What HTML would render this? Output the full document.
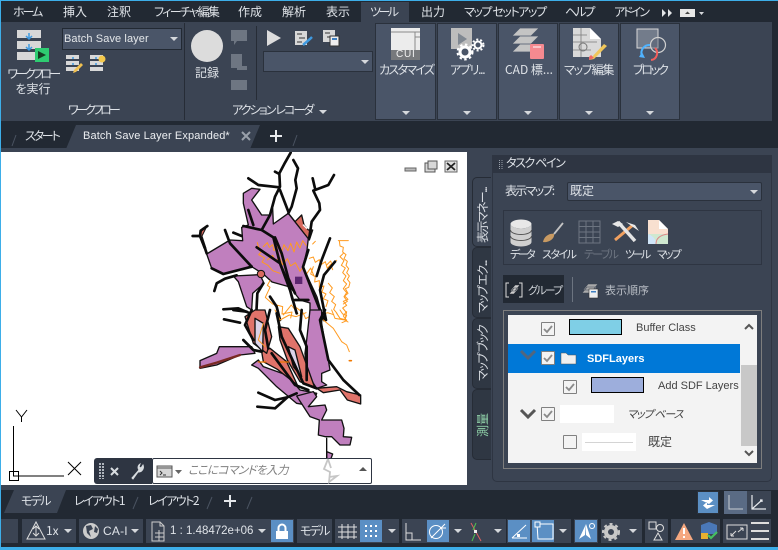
<!DOCTYPE html>
<html lang="ja"><head><meta charset="utf-8"><style>
html,body{margin:0;padding:0;background:#222933}
#r{position:relative;width:778px;height:550px;overflow:hidden;background:#222933;font-family:"Liberation Sans","Noto Sans CJK JP",sans-serif;font-size:12px;color:#dfe3e8}
#r div,#r span.t{position:absolute}
.t{white-space:nowrap;line-height:14px}
.j{font-family:"Noto Sans CJK JP","Liberation Sans",sans-serif;font-size:12px;font-feature-settings:"palt"}
.b{background:#4a5568;box-sizing:border-box;border:1px solid #2a313c}
.g{background:#3b4453;height:24px;top:519px}
.on{background:#5b8fc4;position:absolute}
svg{position:absolute;overflow:visible}
.dn{width:0;height:0;border-left:4px solid transparent;border-right:4px solid transparent;border-top:4px solid #d5d8dc}
.tab{background:#2f3743;left:472px;width:19px;border-radius:5px 0 0 5px;box-sizing:border-box;border:1px solid #262c36;border-right:0}
.rot{transform:rotate(-90deg);transform-origin:0 0;color:#d8dce2}
.cb{width:12px;height:12px;background:#f3f3f3;border:1px solid #808080;border-radius:1px}
</style></head><body><div id="r">
<div style="left:0;top:0;width:778px;height:1px;background:#3daee9"></div>
<div style="left:0;top:0;width:1px;height:550px;background:#3daee9"></div>
<div style="left:0;top:547px;width:778px;height:3px;background:#3daee9"></div>

<div style="left:361px;top:2px;width:48px;height:20px;background:#3b4453"></div>
<span class="t j" style="left:13px;top:5px;letter-spacing:-2px">ホーム</span>
<span class="t j" style="left:63px;top:5px">挿入</span>
<span class="t j" style="left:107px;top:5px">注釈</span>
<span class="t j" style="left:154px;top:5px;letter-spacing:-1.6px">フィーチャ編集</span>
<span class="t j" style="left:238px;top:5px">作成</span>
<span class="t j" style="left:282px;top:5px">解析</span>
<span class="t j" style="left:326px;top:5px">表示</span>
<span class="t j" style="left:370px;top:5px;letter-spacing:-2.500px">ツール</span>
<span class="t j" style="left:421px;top:5px">出力</span>
<span class="t j" style="left:464px;top:5px;letter-spacing:-1.400px">マップ セットアップ</span>
<span class="t j" style="left:565px;top:5px;letter-spacing:-2px">ヘルプ</span>
<span class="t j" style="left:614px;top:5px;letter-spacing:-2px">アドイン</span>
<svg style="left:660px;top:8px" width="14" height="10"><path d="M2 1l4 4-4 4zM8 1l4 4-4 4z" fill="#e4e6e9"/></svg>
<div style="left:680px;top:9px;width:15px;height:8px;background:#e8e8e8"></div>
<svg style="left:680px;top:9px" width="24" height="10"><path d="M5 5l2.500-2.500 2.500 2.500z" fill="#444"/><path d="M19 3h5l-2.500 3z" fill="#d5d8dc"/></svg>

<div style="left:1px;top:22px;width:771px;height:99px;background:#3b4453"></div>
<div style="left:184px;top:23px;width:1px;height:97px;background:#262c36"></div>
<div style="left:256px;top:26px;width:1px;height:74px;background:#262c36"></div>
<svg style="left:17px;top:30px" width="34" height="33">
<path d="M0 0h24v8H0zM0 11h24v8H0zM0 22h24v8H0z" fill="#d8d8d8"/>
<path d="M12 3v5M9 6l3 3 3-3M12 14v5M9 17l3 3 3-3" stroke="#3f9ae0" stroke-width="1.500" fill="none"/>
<rect x="18" y="18" width="14" height="14" fill="#2ecc71"/><path d="M21 21l8 4-8 4z" fill="#153d22"/></svg>
<span class="t j" style="left:3px;top:66px;width:60px;text-align:center;line-height:15px;letter-spacing:-2.600px">ワークフロー</span>
<span class="t j" style="left:3px;top:81px;width:60px;text-align:center;line-height:15px">を実行</span>
<div style="left:62px;top:28px;width:120px;height:22px;background:#4a5568;box-sizing:border-box;border:1px solid #222933"></div>
<span class="t" style="left:64px;top:32px;color:#e4e7ea;font-size:11px;letter-spacing:.1px">Batch Save layer</span>
<div class="dn" style="left:170px;top:37px"></div>
<svg style="left:66px;top:55px" width="40" height="18"><path d="M0 0h13v4H0zM0 6h13v4H0zM0 12h13v4H0z" fill="#d8d8d8"/><path d="M8 15l7-7 2 2-7 7-3 1z" fill="#f0c050"/><path d="M7 2v2M7 8v2" stroke="#3f9ae0" stroke-width="1.500"/></svg>
<svg style="left:90px;top:55px" width="20" height="18"><path d="M0 0h13v4H0zM0 6h13v4H0zM0 12h13v4H0z" fill="#d8d8d8"/><circle cx="12" cy="4" r="3.500" fill="#f3c84b"/><path d="M6 2v2M6 8v2" stroke="#3f9ae0" stroke-width="1.500"/></svg>
<span class="t j" style="left:68px;top:103px;letter-spacing:-2.800px">ワークフロー</span>
<div style="left:191px;top:30px;width:32px;height:32px;border-radius:50%;background:#dcdcdc"></div>
<span class="t j" style="left:195px;top:66px">記録</span>
<svg style="left:231px;top:30px" width="17" height="62"><path d="M0 0h16v11H6l-3 4v-4H0z" fill="#6e7682"/><path d="M0 24h11v12h5v4H6v-2H0z" fill="#6e7682"/><path d="M0 50h16v10H0z" fill="#6e7682"/></svg>
<svg style="left:267px;top:30px" width="14" height="16"><path d="M0 0l14 8-14 8z" fill="#dcdcdc"/></svg>
<svg style="left:295px;top:31px" width="18" height="15"><path d="M0 0h12v14H0z" fill="#d8d8d8"/><path d="M2 3h5M4 7h6M2 11h5" stroke="#555" stroke-width="1.200"/><path d="M8 14l7-6 2-2" stroke="#3f9ae0" stroke-width="2.500"/></svg>
<svg style="left:323px;top:30px" width="17" height="16"><path d="M0 0h12v12H0z" fill="#d8d8d8"/><path d="M2 3h5M4 7h5" stroke="#555" stroke-width="1.200"/><rect x="7" y="6" width="9" height="10" fill="#eee" stroke="#333"/><path d="M9 8h5v2H9z" fill="#3f7fc0"/></svg>
<div style="left:263px;top:51px;width:110px;height:21px;background:#4a5568;box-sizing:border-box;border:1px solid #2a313c"></div>
<div class="dn" style="left:361px;top:60px"></div>
<span class="t j" style="left:232px;top:103px;letter-spacing:-1.900px">アクション レコーダ</span>
<div class="dn" style="left:319px;top:110px"></div>

<div class="b" style="left:375px;top:23px;width:61px;height:97px"></div>
<div class="b" style="left:437px;top:23px;width:60px;height:97px"></div>
<div class="b" style="left:498px;top:23px;width:60px;height:97px"></div>
<div class="b" style="left:559px;top:23px;width:60px;height:97px"></div>
<div class="b" style="left:620px;top:23px;width:60px;height:97px"></div>
<div class="dn" style="left:402px;top:111px"></div>
<div class="dn" style="left:463px;top:111px"></div>
<div class="dn" style="left:524px;top:111px"></div>
<div class="dn" style="left:585px;top:111px"></div>
<div class="dn" style="left:646px;top:111px"></div>
<svg style="left:391px;top:28px" width="30" height="32"><path d="M0 0h29v22H0z" fill="#ececec"/><path d="M0 4h29M24 4v18M24 9h5" stroke="#8a8a8a" fill="none"/><path d="M0 22h29v10H0z" fill="#77797c"/></svg>
<span class="t" style="left:396px;top:48px;font-size:10px;letter-spacing:.8px;color:#f2f2f2">CUI</span>
<svg style="left:451px;top:28px" width="34" height="32"><path d="M0 0h21v21H0z" fill="#bdbdbd"/><path d="M7 5l9 6-9 6z" fill="#7f8791"/><circle cx="14" cy="24" r="5" fill="#4a5568" stroke="#fff" stroke-width="3"/><circle cx="14" cy="24" r="7.500" fill="none" stroke="#fff" stroke-width="2" stroke-dasharray="2.500 2.500"/><circle cx="27" cy="17" r="3.500" fill="#4a5568" stroke="#fff" stroke-width="2"/><circle cx="27" cy="17" r="5.500" fill="none" stroke="#fff" stroke-width="2" stroke-dasharray="2 2"/></svg>
<svg style="left:512px;top:28px" width="34" height="32"><path d="M8 0h19l-8 8H0zM8 8h19l-8 8H0zM8 16h19l-8 8H0z" fill="#c4c4c4" stroke="#4a5568" stroke-width=".7"/><rect x="18" y="16" width="14" height="15" rx="1" fill="#f58a90"/><path d="M21 19h8" stroke="#fff"/></svg>
<svg style="left:573px;top:28px" width="34" height="32"><path d="M0 0h17l11 11v18H0z" fill="#d9d9d9"/><path d="M17 0l11 11H17z" fill="#fff"/><path d="M0 7h14M0 14h24M0 22h18M8 0v29" stroke="#7a7a7a" stroke-width=".8"/><circle cx="10" cy="19" r="4" fill="none" stroke="#777"/><path d="M18 30l13-14 3 2-13 13-5 1z" fill="#f0c65a"/><path d="M16 29l2-2 3 3-5 2z" fill="#e66"/></svg>
<svg style="left:636px;top:28px" width="30" height="32"><path d="M1 1h21v19H1z" fill="#737c8b" stroke="#d8d8d8"/><circle cx="22" cy="17" r="7.500" fill="#4a5568" fill-opacity=".4" stroke="#d0d0d0" stroke-width="1.200"/><path d="M6 28a8 8 0 0 1 8-11" stroke="#4fb3ff" stroke-width="2" fill="none"/><path d="M15 32a7 7 0 0 0 4-12" stroke="#f25f5c" stroke-width="2" fill="none"/><path d="M6 24l3 6-6-1z" fill="#4fb3ff"/></svg>
<span class="t j" style="left:379px;top:63px;letter-spacing:-1.700px">カスタマイズ</span>
<span class="t j" style="left:450px;top:63px;letter-spacing:-1.300px">アプリ...</span>
<span class="t j" style="left:505px;top:63px">CAD 標...</span>
<span class="t j" style="left:564px;top:63px;letter-spacing:-1.200px">マップ編集</span>
<span class="t j" style="left:633px;top:63px;letter-spacing:-2.200px">ブロック</span>

<div style="left:1px;top:148px;width:777px;height:4px;background:#3b4453"></div>
<svg style="left:0;top:124px" width="320" height="26">
<path d="M66 25L76 1H260L250 25z" fill="#3b4453"/>
<path d="M12 22l4-11M293 22l4-11" stroke="#4a5361" fill="none"/>
<path d="M242 8l8 8M250 8l-8 8" stroke="#99a0aa" stroke-width="2"/>
<path d="M276 6v12M270 12h12" stroke="#e8eaed" stroke-width="2"/>
</svg>
<span class="t j" style="left:25px;top:129px;letter-spacing:-2.200px">スタート</span>
<span class="t" style="left:83px;top:129px;color:#eceef1;font-size:11px;letter-spacing:.12px">Batch Save Layer Expanded*</span>

<div style="left:1px;top:152px;width:466px;height:333px;background:#fff"></div>

<svg style="left:0;top:0" width="778" height="550" viewBox="0 0 778 550">
<clipPath id="cv"><rect x="1" y="152" width="466" height="333"/></clipPath>
<g clip-path="url(#cv)" stroke-linejoin="round" stroke-linecap="round">
<g transform="translate(180,150) scale(.33333)">
<path d="M190 130L215 115 240 118 215 150 245 195 270 195 278 175 280 222 325 190 385 265 381 300 369 351 411 441 425 490 425 510 390 510 390 459 360 450 330 411 276 396 250 372 215 350 130 372 95 355 80 312 120 288 150 270 188 272 185 232 205 225 190 160Z" fill="#c07fbe" stroke="#111" stroke-width="4"/>
<path d="M160 378L240 374 252 400 218 430 215 480 200 470 175 395Z" fill="#c07fbe" stroke="#111" stroke-width="4"/>
<path d="M345 380h22v22h-22z" fill="#5c2670"/>
<path d="M325 190L345 215 365 195 372 225 385 240 398 240 388 270 325 190Z" fill="#d86a5e" stroke="#111" stroke-width="4"/>
<path d="M370 225l10 10 8-8" stroke="#fff" stroke-width="4" fill="none"/>
<path d="M68 235L58 258 72 295 78 295 66 258 80 230Z" fill="#d86a5e" stroke="#111" stroke-width="3"/>
<path d="M232 372a11 11 0 1 0 22 0a11 11 0 1 0-22 0z" fill="#d86a5e" stroke="#111" stroke-width="3"/>
<g fill="none" stroke="#ff9a1f" stroke-width="3">
<path d="M232 278l4 14 10 10-10 12 18 10-8 12 18 10 14 16 22 8M250 290l12-12 6 14 10-8 4 18 14-14 6 24 10-28 12 18 8-22 10 26 8-30 10 18 8-22 10 14"/>
<path d="M262 330l16-14 8 18 12-12 10 22 14-18 10 22 14-10 14 26 10-14 8 24 14-20 10 24"/>
<path d="M270 392l-8 14 8 6-14 30 22 20 30 8-2 22 30-6-4 18M310 495l24-30 20 26M345 470l24 18 8 18 28-16 14 6 24-8 18 6"/>
<path d="M475 272h30M478 272l2 16 10 4-2 14 10 8-6 12 10 8-4 12 8 10-6 12 8 10-6 10 8 10-4 14-10 4 8 14-10 8 10 10-14 6 10 12-12 8 10 12-8 12 10 14-14 6"/>
<path d="M490 310l-10 10 12 12-8 14 12 8-8 14 10 10-8 14 10 10-10 14 10 12-8 12 10 14-12 8"/>
<path d="M398 282l8-8M388 325l12-4 6 16 12-8 4 16 14-10 6 20 10-12 6 16M400 350l-8 22 14 8-2 16 14-4 0 20 14-4-6 18 12 6-8 14 14 6-6 18M440 345l12-12 4 12 14-14M445 400l12 14-8 14 14 12-8 14 12 10-6 14 10 12"/>
</g>
<g fill="none" stroke="#0c0c0c" stroke-width="8">
<path d="M332 8L315 38 298 70 300 110 285 140 270 195 245 240M205 85L235 105 298 112M298 72L285 65M340 30L354 55 346 90 350 115 335 170 325 190M300 120L325 185"/>
<path d="M462 75L445 105 400 122 418 160 420 180 395 215 388 262M398 85L405 115"/>
<path d="M38 258H60M82 228L62 242 60 258 75 295 80 310"/>
<path d="M190 228L245 240 280 262 300 340 330 420 350 490M135 240L150 280 215 350M205 180L220 225M230 292L300 340 325 400 338 450"/>
<path d="M285 262L305 310 325 385 345 430M385 300L369 351 400 430 420 480 432 510M450 265L425 330 410 378M465 335L432 375 420 420 438 510"/>
<path d="M170 376L135 386 110 400 103 423M130 478L175 475 210 490M250 400L232 430 228 510M270 440L290 470 300 510M345 450H385M160 248L185 258M95 355L130 372 215 350"/>
</g>
</g>
<g transform="translate(200,310) scale(.33333)">
<g fill="#c07fbe" stroke="#111" stroke-width="4">
<path d="M0 152L50 130 58 110 155 110 165 130 120 135 50 165 0 175Z"/>
<path d="M155 165L175 150 190 170 260 195 300 240 350 250 345 265 320 285 290 280 230 230 175 175Z"/>
<path d="M320 90L330 0 365 0 365 40 375 100 385 150 390 180 365 190 365 215 380 225 350 235 320 190 315 130Z"/>
<path d="M290 258L340 245 350 260 325 290 375 285 380 300 365 330 425 330 432 355 430 380 455 382 450 405 420 405 395 380 375 380 355 375 358 330 330 320Z"/>
<path d="M380 425L398 432 392 448 380 445Z"/>
</g>
<g fill="#e0736a" stroke="#111" stroke-width="4">
<path d="M235 50L265 55 300 110 320 165 345 235 300 215 262 150 240 90Z"/>
<path d="M185 125L210 115 260 155 292 225 232 178 190 155Z"/>
<path d="M350 235L410 230 440 245 482 255 482 282 442 270 420 240 370 248Z"/>
<path d="M135 20L165 0 195 0 215 80 200 130 160 100Z"/>
</g>
<g fill="#dcd3e8" stroke="#111" stroke-width="4">
<path d="M165 25L190 40 188 125 165 100Z"/>
<path d="M265 110L285 120 305 200 280 170Z"/>
</g>
<path d="M0 172L50 158 120 135" stroke="#7a2a24" stroke-width="7" fill="none"/>
<path d="M175 156h22M235 156h30" stroke="#f07800" stroke-width="4" fill="none"/>
<path d="M448 152h6" stroke="#f07800" stroke-width="5"/>
<g fill="none" stroke="#ff9a1f" stroke-width="3">
<path d="M190 40l-15 50 20 20M225 0l15 30 28-15 20 5 30-12M370 30l30 25 25 40 15 10 8 20M395 0l10 25 30 5 5-25M410 10l10 15 20 5"/>
<path d="M420 0l8 12 12 4-6 14 10 6"/>
</g>
<g fill="none" stroke="#0c0c0c" stroke-width="8">
<path d="M72 28L120 38M100 0L140 5M160 90L135 45 155 0M210 0L195 60 205 115M230 10L245 80 310 220 350 235M305 0L300 60 320 110 320 210M375 0L360 30 385 150 430 210 478 255"/>
<path d="M175 248L225 270 262 262 290 250M172 290L225 295 262 262M215 130L285 225 325 240M130 90L160 120 185 125"/>
</g>
<path d="M380 385V445" stroke="#0c0c0c" stroke-width="4"/>
</g>
</g>
<g stroke="#000" fill="none" stroke-width="1">
<path d="M13.500 426V476H64"/><rect x="9.500" y="471.500" width="9" height="9"/>
<path d="M16 410l5.500 7 5.500-7M21.500 417v5M68 462l13 13M81 462l-13 13"/>
</g>
</svg>

<svg style="left:404px;top:160px" width="56" height="14">
<path d="M1 8h11v3H1z" fill="#bbb" stroke="#666"/>
<rect x="21" y="3" width="10" height="9" fill="#d8d8d8" stroke="#555"/><rect x="24" y="1" width="9" height="8" fill="#d8d8d8" stroke="#555"/>
<rect x="41" y="1" width="12" height="11" fill="#e0e0e0" stroke="#666"/><path d="M43 3l8 7M51 3l-8 7" stroke="#222" stroke-width="1.800"/>
</svg>

<div style="left:94px;top:458px;width:58px;height:26px;background:#2e3542;border-radius:3px 0 0 3px"></div>
<div style="left:152px;top:458px;width:220px;height:26px;background:#fff;box-sizing:border-box;border:1px solid #2e3542;border-radius:2px"></div>
<svg style="left:97px;top:461px" width="90" height="20">
<path d="M3 2v16M6 2v16" stroke="#aeb4bc" stroke-width="2" stroke-dasharray="2 1"/>
<path d="M14 7l7 7M21 7l-7 7" stroke="#d8dce0" stroke-width="2"/>
<path d="M35 17l7-8a4 4 0 0 1 1-6l-1 3 2 1 2-3a5 5 0 0 1-5 7l-5 7z" fill="#d8dce0" stroke="#d8dce0"/>
<rect x="60" y="5" width="15" height="11" fill="#d6d6d6" stroke="#555"/><path d="M60 7h15" stroke="#555"/><path d="M63 10l2 2-2 2M66 14h3" stroke="#333" fill="none"/>
<path d="M78 9h7l-3.500 4z" fill="#666"/>
</svg>
<span class="t j" style="left:188px;top:463px;color:#808080;font-style:italic;font-size:11.500px;letter-spacing:-.5px">ここにコマンドを入力</span>
<svg style="left:320px;top:456px" width="18" height="30"><path d="M8 3l-4 10 6 3-1 10 8-6-8 1M8 3l3 9" stroke="#c6c6c6" stroke-width="1.800" fill="none"/></svg>
<svg style="left:358px;top:466px" width="10" height="6"><path d="M1 5l4-4 4 4z" fill="#555"/></svg>

<div style="left:467px;top:152px;width:311px;height:333px;background:#3b4453"></div>
<div style="left:492px;top:155px;width:280px;height:19px;background:#2e3542"></div>
<div style="left:492px;top:173px;width:280px;height:309px;background:#3b4453;box-sizing:border-box;border:1px solid #2e3542;border-top:0;border-radius:0 0 5px 5px"></div>
<svg style="left:498px;top:160px" width="5" height="10"><path d="M1.500 0v10M4 0v10" stroke="#9aa1ab" stroke-dasharray="1 1"/></svg>
<span class="t j" style="left:506px;top:156px;letter-spacing:-1.400px">タスク ペイン</span>

<div class="tab" style="top:177px;height:70px;background:#3b4453"></div>
<div class="tab" style="top:247px;height:71px"></div>
<div class="tab" style="top:318px;height:71px"></div>
<div class="tab" style="top:389px;height:71px"></div>
<span class="t j rot" style="left:476px;top:243px;letter-spacing:-1.600px">表示マネー...</span>
<span class="t j rot" style="left:476px;top:313px;letter-spacing:-1.600px">マップ エク...</span>
<span class="t j rot" style="left:476px;top:381px;letter-spacing:-1.300px">マップ ブック</span>
<span class="t j rot" style="left:476px;top:437px;color:#8fd0a8">測量</span>

<span class="t j" style="left:505px;top:184px;letter-spacing:-1.700px">表示マップ:</span>
<div style="left:567px;top:182px;width:195px;height:19px;background:#4a5568;box-sizing:border-box;border:1px solid #2a313c;border-radius:2px"></div>
<span class="t j" style="left:570px;top:184px">既定</span>
<div class="dn" style="left:750px;top:190px"></div>

<div style="left:503px;top:210px;width:259px;height:55px;box-sizing:border-box;border:1px solid #2e3542"></div>
<svg style="left:510px;top:219px" width="170" height="30">
<ellipse cx="11" cy="5" rx="10.500" ry="4.500" fill="#e8e8e8"/><path d="M.5 5v18a10.500 4.500 0 0 0 21 0V5a10.500 4.500 0 0 1-21 0z" fill="#cfcfcf"/><path d="M.5 11a10.500 4.500 0 0 0 21 0M.5 17a10.500 4.500 0 0 0 21 0" stroke="#555" fill="none"/>
<path d="M33 23c1-6 7-9 11-8 1 5-6 9-11 8z" fill="#c89a62"/><path d="M44 15l9-11" stroke="#c4c4c4" stroke-width="1.800"/>
<path d="M69 2h21v22H69zM69 7.500h21M69 13h21M69 18.500h21M76 2v22M83 2v22" stroke="#6c7480" fill="none"/>
<path d="M105 21L123 6" stroke="#f0a060" stroke-width="3"/><path d="M108 3l17 19" stroke="#e4e4e4" stroke-width="3.500"/><path d="M102 5l6-3 5 3-5 3zM116 3l9 3 4 6-6-4z" fill="#e8e8e8"/>
<path d="M138 1h11l9 9v13h-20z" fill="#f8e0d0"/><path d="M149 1l9 9h-9z" fill="#fff"/><path d="M138 15h20v10h-20z" fill="#cfe8d0"/><path d="M138 15v10h8c0-5-3-8-8-10z" fill="#cfe5f8"/><path d="M146 25c0-6 4-9 12-10" stroke="#d88" fill="none"/>
</svg>
<span class="t j" style="left:510px;top:247px;font-size:11px;letter-spacing:-2.500px">データ</span>
<span class="t j" style="left:542px;top:247px;font-size:11px;letter-spacing:-1.500px">スタイル</span>
<span class="t j" style="left:584px;top:247px;font-size:11px;color:#6c7480;letter-spacing:-1.700px">テーブル</span>
<span class="t j" style="left:625px;top:247px;font-size:11px;letter-spacing:-2.500px">ツール</span>
<span class="t j" style="left:657px;top:247px;font-size:11px;letter-spacing:-2px">マップ</span>

<div style="left:503px;top:275px;width:61px;height:28px;background:#222933"></div>
<div style="left:572px;top:277px;width:1px;height:25px;background:#6c7480"></div>
<svg style="left:505px;top:282px" width="18" height="16"><path d="M4 1H1v14h3M14 1h3v14h-3" stroke="#ddd" fill="none"/><path d="M5 9l5-6h5l-5 6zM4 12l5-6h5l-5 6z" fill="#ccc" stroke="#222933" stroke-width=".6"/></svg>
<span class="t j" style="left:528px;top:283px;font-size:11px;color:#cfd3d8;letter-spacing:-1.800px">グループ</span>
<svg style="left:582px;top:282px" width="18" height="16"><path d="M1 8l5-6h10l-5 6zM0 11l5-6h10l-5 6z" fill="#aaa" stroke="#3b4453" stroke-width=".6"/><rect x="7" y="7" width="9" height="9" fill="#eee" stroke="#333" stroke-width=".6"/><path d="M9 9h5v1.500H9z" fill="#3f7fc0"/></svg>
<span class="t j" style="left:605px;top:283px;font-size:11px;color:#b8bdc4">表示順序</span>

<div style="left:503px;top:310px;width:259px;height:159px;box-sizing:border-box;border:1px solid #7d7d7d;background:#3b4453"></div>
<div style="left:508px;top:315px;width:249px;height:148px;background:#f3f3f3;overflow:hidden"></div>
<div style="left:508px;top:344px;width:232px;height:29px;background:#0078d7"></div>
<div style="left:741px;top:365px;width:16px;height:81px;background:#c8c8c8"></div>
<svg style="left:741px;top:315px" width="16" height="148"><path d="M4 14l4-4 4 4" stroke="#555" stroke-width="2" fill="none"/><path d="M4 136l4 4 4-4" stroke="#555" stroke-width="2" fill="none"/></svg>
<svg style="left:518px;top:320px" width="60" height="130">
<path d="M3 31l7 7 7-7" stroke="#52667e" stroke-width="3" fill="none"/>
<path d="M3 90l7 7 7-7" stroke="#555" stroke-width="3" fill="none"/>
</svg>
<div class="cb" style="left:541px;top:322px"></div>
<div class="cb" style="left:541px;top:351px"></div>
<div class="cb" style="left:563px;top:380px"></div>
<div class="cb" style="left:541px;top:407px"></div>
<div class="cb" style="left:563px;top:435px"></div>
<svg style="left:541px;top:322px" width="50" height="100"><path d="M3 7l3 3 5-6M3 36l3 3 5-6M25 65l3 3 5-6M3 92l3 3 5-6" stroke="#8a8a8a" stroke-width="1.800" fill="none"/></svg>
<svg style="left:560px;top:351px" width="18" height="14"><path d="M1 2h5l2 2h8v9H1z" fill="#f0f0f0" stroke="#555" stroke-width=".5"/></svg>
<div style="left:569px;top:319px;width:51px;height:14px;background:#7fcfe6;border:1px solid #000"></div>
<div style="left:591px;top:377px;width:51px;height:14px;background:#9daedc;border:1px solid #000"></div>
<div style="left:560px;top:405px;width:54px;height:18px;background:#fff"></div>
<div style="left:582px;top:433px;width:54px;height:18px;background:#fff"></div>
<div style="left:585px;top:442px;width:48px;height:1px;background:#d4d4d4"></div>
<span class="t" style="left:636px;top:321px;color:#444;font-size:11px">Buffer Class</span>
<span class="t" style="left:587px;top:352px;color:#fff;font-weight:bold;font-size:11px">SDFLayers</span>
<span class="t" style="left:658px;top:379px;color:#444;font-size:11px">Add SDF Layers</span>
<span class="t j" style="left:627px;top:407px;color:#444;font-style:italic;font-size:11px;letter-spacing:-1px">マップ ベース</span>
<span class="t j" style="left:648px;top:435px;color:#444">既定</span>

<div style="left:1px;top:485px;width:777px;height:5px;background:#3b4453"></div>
<svg style="left:0;top:490px" width="260" height="24"><path d="M4 23L14 0H66L57 23z" fill="#3b4453"/><path d="M133 19l5-12M207 19l5-12M247 19l5-12" stroke="#4a5361" fill="none"/><path d="M230 5v12M224 11h12" stroke="#e4e7ea" stroke-width="2"/></svg>
<span class="t j" style="left:21px;top:494px;letter-spacing:-1.700px">モデル</span>
<span class="t j" style="left:74px;top:494px;letter-spacing:-1.500px">レイアウト1</span>
<span class="t j" style="left:148px;top:494px;letter-spacing:-1.500px">レイアウト2</span>

<div class="on" style="left:697px;top:491px;width:22px;height:23px;border:1px solid #2a313c;box-sizing:border-box"></div>
<svg style="left:697px;top:491px" width="22" height="23"><path d="M4 9h8V6l4 3.500-4 3.500zM18 14h-8v-3l-4 3.500 4 3.500z" fill="#fff"/></svg>
<div style="left:724px;top:491px;width:47px;height:23px;background:#3b4453"></div>
<div style="left:724px;top:491px;width:23px;height:23px;background:#5a6b84"></div>
<svg style="left:724px;top:491px" width="47" height="23"><path d="M5 4v14h14" stroke="#c8ccd2" fill="none"/><path d="M28 4v14h14M28 18l10-9M36 9h2v2" stroke="#e8eaed" fill="none" stroke-width="1.200"/></svg>

<div class="g" style="left:1px;width:17px"></div>
<div class="g" style="left:22px;width:54px"></div>
<div class="g" style="left:79px;width:64px"></div>
<div class="g" style="left:146px;width:148px"></div>
<div class="g" style="left:297px;width:35px"></div>
<div class="g" style="left:335px;width:64px"></div>
<div class="g" style="left:402px;width:104px"></div>
<div class="g" style="left:507px;width:64px"></div>
<div class="g" style="left:574px;width:24px"></div>
<div class="g" style="left:601px;width:41px"></div>
<div class="g" style="left:645px;width:23px"></div>
<div class="g" style="left:671px;width:49px"></div>
<div class="g" style="left:723px;width:48px"></div>

<span class="t j" style="left:46px;top:524px">1x</span>
<span class="t" style="left:103px;top:524px;letter-spacing:.2px">CA-I</span>
<span class="t" style="left:170px;top:524px;font-size:11.500px">1 : 1.48472e+06</span>
<span class="t j" style="left:300px;top:524px;letter-spacing:-1.700px">モデル</span>
<div class="dn" style="left:64px;top:529px"></div>
<div class="dn" style="left:131px;top:529px"></div>
<div class="dn" style="left:258px;top:529px"></div>
<div class="dn" style="left:388px;top:529px"></div>
<div class="dn" style="left:454px;top:529px"></div>
<div class="dn" style="left:494px;top:529px"></div>
<div class="dn" style="left:559px;top:529px"></div>
<div class="dn" style="left:629px;top:529px"></div>

<div class="on" style="left:271px;top:520px;width:22px;height:22px"></div>
<div class="on" style="left:360px;top:520px;width:22px;height:22px"></div>
<div class="on" style="left:427px;top:520px;width:22px;height:22px"></div>
<div class="on" style="left:508px;top:520px;width:22px;height:22px"></div>
<div class="on" style="left:532px;top:520px;width:22px;height:22px"></div>
<div class="on" style="left:575px;top:520px;width:22px;height:22px"></div>

<svg style="left:0;top:516px" width="778" height="30" fill="none">
<path d="M36 6l-9 17h18zM36 10v10M33 13l3-3 3 3M33 17l3 3 3-3" stroke="#ddd"/>
<circle cx="91" cy="15" r="8" fill="#ccc"/><path d="M86 10l5-1 2 4-4 2 2 6-4-4zM95 10l3 3-1 4-3-1z" fill="#3b4453"/>
<path d="M152 6h8l4 4v15h-12zM160 6v4h4M155 17h9M155 21h9M159 14v11" stroke="#ccc"/>
<path d="M278.500 15v-3a3.500 3.500 0 0 1 7 0v3" stroke="#fff" stroke-width="2"/><path d="M276 15h12v8h-12z" fill="#fff"/>
<path d="M342 8v15M348 8v15M354 8v15M338 11h19M338 16h19M338 21h19" stroke="#e0e0e0"/>
<path d="M365 10h2M370 10h2M375 10h2M365 15h2M370 15h2M375 15h2M365 20h2M370 20h2M375 20h2" stroke="#fff" stroke-width="2"/>
<path d="M406 7v17h15M406 17h6v7" stroke="#ddd"/>
<circle cx="436" cy="16" r="6.500" stroke="#fff"/><path d="M431 22l14-14M440 12h6" stroke="#fff"/>
<path d="M471 7l10 18" stroke="#e06060"/><path d="M476 7l-3 7M475 18l-3 7" stroke="#50c050"/><rect x="474" y="14" width="3" height="3" fill="#eee"/>
<path d="M512 22l14-13M512 22h15" stroke="#fff"/><rect x="517" y="18" width="3" height="3" fill="#fff"/>
<path d="M537 8h16v15h-15z" stroke="#fff"/><rect x="535" y="6" width="5" height="5" fill="#5b8fc4" stroke="#fff"/>
<path d="M586 8l-7 15 6-4 1-11zM586 8l5 15-5-4z" fill="#fff"/><circle cx="592" cy="10" r="2.500" stroke="#fff"/>
<circle cx="611" cy="16" r="5" stroke="#c8c8c8" stroke-width="4"/><circle cx="611" cy="16" r="8" stroke="#c8c8c8" stroke-width="2" stroke-dasharray="3 3"/>
<path d="M649 6h7v7h-7zM658 17l4 7h-8z" stroke="#ddd"/><circle cx="660" cy="12" r="3.500" stroke="#ddd"/>
<path d="M684 7l-9 17h18z" fill="#f5a880"/><path d="M684 12v6M684 20v2" stroke="#fff" stroke-width="2"/>
<path d="M701 9l8-3 8 3v9h-16z" fill="#4a78b8"/><rect x="701" y="17" width="7" height="6" fill="#e8b030"/><path d="M708 19l3 3 6-6" stroke="#46c060" stroke-width="2.200"/>
<path d="M727 9h20v14h-20z" stroke="#ddd"/><path d="M731 20l5-5M743 12l-5 4M731 20h3M731 20v-3M743 12h-3M743 12v3" stroke="#ddd"/>
<path d="M751 7h18M751 15h18M751 23h18" stroke="#ddd" stroke-width="2"/>
</svg>
</div></body></html>
